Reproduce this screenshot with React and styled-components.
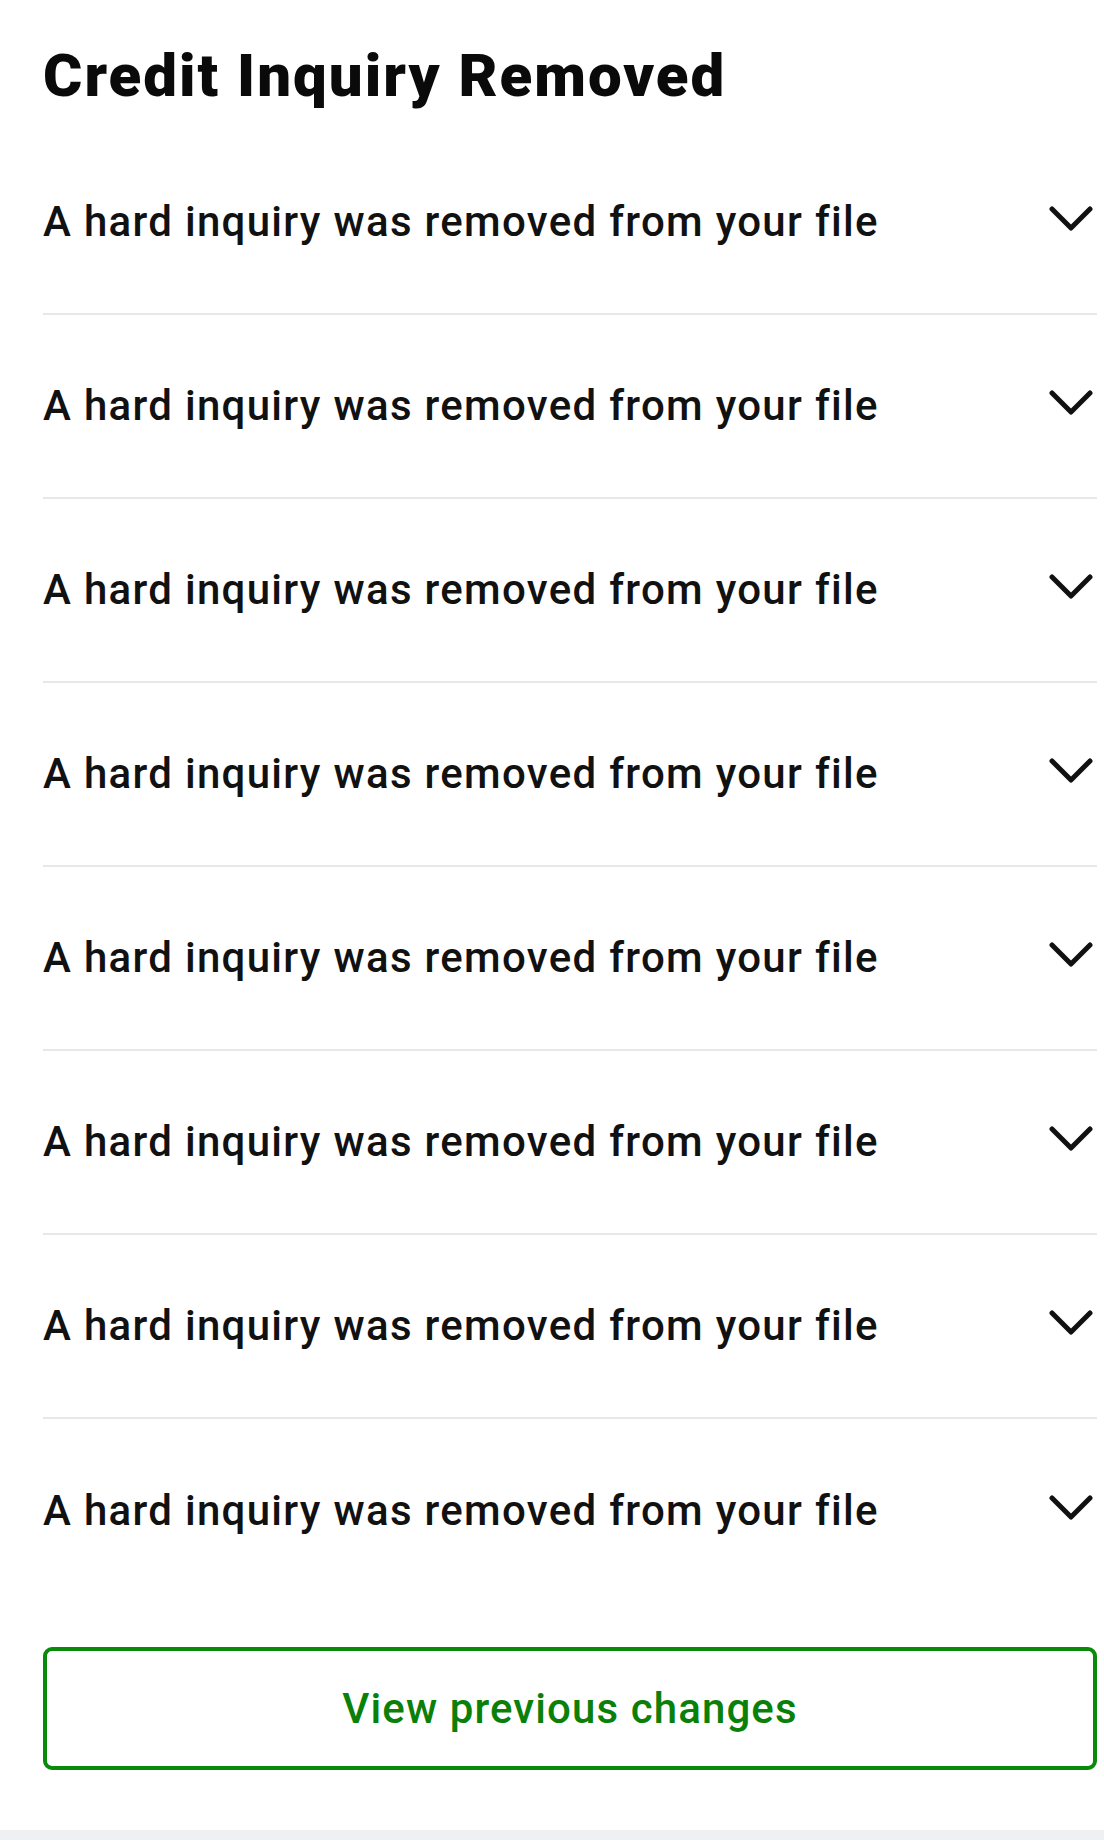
import React from "react";
import styled, { createGlobalStyle } from "styled-components";

const Global = createGlobalStyle`
  html, body { margin: 0; padding: 0; background: #ffffff; }
  body { font-family: Roboto, "Liberation Sans", sans-serif; color: #111111; }
`;

const Page = styled.div`
  min-height: 1840px;
  display: flex;
  flex-direction: column;
  background: #ffffff;
`;

const Content = styled.main`
  flex: 1;
  padding: 46px 7px 0 43px;
  display: flex;
  flex-direction: column;
`;

const Title = styled.h1`
  margin: 0 0 25px;
  font-size: 60px;
  line-height: 60px;
  font-weight: 900;
  letter-spacing: 2px;
  color: #0a0a0a;
`;

const List = styled.div`
  display: flex;
  flex-direction: column;
`;

const Row = styled.button`
  all: unset;
  box-sizing: border-box;
  height: 184px;
  display: flex;
  align-items: center;
  justify-content: space-between;
  border-bottom: ${(p) => (p.$last ? "none" : "2px solid #e8e8e8")};
  padding-right: 4px;
  cursor: pointer;
`;

const RowText = styled.span`
  font-size: 42px;
  line-height: 42px;
  font-weight: 500;
  letter-spacing: 1.3px;
  color: #111111;
`;

const Chevron = styled.svg`
  width: 44px;
  height: 28px;
  flex: none;
  margin-top: -6px;
`;

const ViewButton = styled.button`
  all: unset;
  box-sizing: border-box;
  margin-top: 44px;
  height: 123px;
  border: 4px solid #0a8a0a;
  border-radius: 9px;
  display: flex;
  align-items: center;
  justify-content: center;
  font-family: Roboto, "Liberation Sans", sans-serif;
  font-size: 42px;
  font-weight: 500;
  letter-spacing: 1.1px;
  color: #0a8008;
  cursor: pointer;
`;

const FooterStrip = styled.div`
  height: 10px;
  background: #eef0f2;
`;

const Spacer = styled.div`
  flex: 1;
`;

function ChevronDown() {
  return (
    <Chevron viewBox="0 0 44 28" fill="none">
      <path
        d="M3 4 L22 23 L41 4"
        stroke="#111111"
        strokeWidth="5"
        strokeLinecap="round"
        strokeLinejoin="round"
      />
    </Chevron>
  );
}

export default function App() {
  const items = Array.from({ length: 8 }, () => "A hard inquiry was removed from your file");
  return (
    <Page>
      <Global />
      <Content>
        <Title>Credit Inquiry Removed</Title>
        <List>
          {items.map((t, i) => (
            <Row key={i} $last={i === items.length - 1}>
              <RowText>{t}</RowText>
              <ChevronDown />
            </Row>
          ))}
        </List>
        <ViewButton>View previous changes</ViewButton>
        <Spacer />
      </Content>
      <FooterStrip />
    </Page>
  );
}
